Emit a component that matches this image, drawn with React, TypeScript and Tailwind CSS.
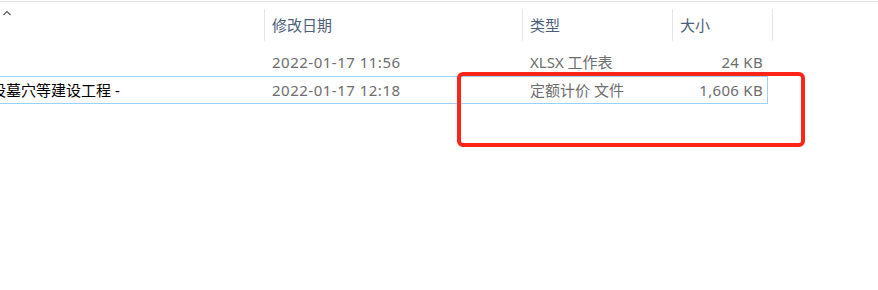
import React from 'react';

const files = [
  { name: '', date: '2022-01-17 11:56', type: 'XLSX 工作表', size: '24 KB', selected: false },
  { name: '设墓穴等建设工程 -', date: '2022-01-17 12:18', type: '定额计价 文件', size: '1,606 KB', selected: true },
];

const HeaderCell = ({ label, width }: { label: string; width: string }) => (
  <div className={`flex items-center ${width}`}>
    <div className="h-[32px] w-px bg-[#e5e5e5]" />
    <span className="pl-[7px] text-[#4c607a]">{label}</span>
  </div>
);

export default function App() {
  return (
    <div
      className="relative w-[878px] h-[290px] overflow-hidden bg-white text-[15px] leading-none"
      style={{ fontFamily: '"Noto Sans", "Noto Sans CJK SC", sans-serif' }}
    >
      <div className="mt-px h-px bg-[#e3e3e3]" />

      <div className="-ml-[24px]">
        {/* column header */}
        <div className="flex h-[46px] items-center">
          <div className="relative h-full w-[288px]">
            <svg className="absolute left-[27px] top-[8px]" width="8" height="6" viewBox="0 0 8 6">
              <path d="M0.5 5 L4 1.5 L7.5 5" fill="none" stroke="#5a5a5a" strokeWidth="1.2" />
            </svg>
          </div>
          <HeaderCell label="修改日期" width="w-[258px]" />
          <HeaderCell label="类型" width="w-[150px]" />
          <HeaderCell label="大小" width="w-[100px]" />
          <div className="h-[32px] w-px bg-[#e5e5e5]" />
        </div>

        {/* rows */}
        {files.map((f, i) => (
          <div
            key={i}
            className={`flex h-[28px] w-[792px] items-center border ${
              f.selected ? 'border-[#99d1ff]' : 'border-transparent'
            }`}
          >
            <div className="w-[287px] pl-[14px] text-black whitespace-nowrap">{f.name}</div>
            <div className="w-[258px] pl-[8px] tracking-[0.5px] text-[#6d6d6d] whitespace-nowrap">{f.date}</div>
            <div className="w-[150px] pl-[8px] text-[#6d6d6d] whitespace-nowrap">{f.type}</div>
            <div className="w-[95px] pr-[4px] tracking-[0.3px] text-right text-[#6d6d6d] whitespace-nowrap">{f.size}</div>
          </div>
        ))}
      </div>

      {/* annotation */}
      <div className="absolute left-[457px] top-[72px] h-[75px] w-[348px] rounded-[6px] border-4 border-[#ff2418]" />
    </div>
  );
}
